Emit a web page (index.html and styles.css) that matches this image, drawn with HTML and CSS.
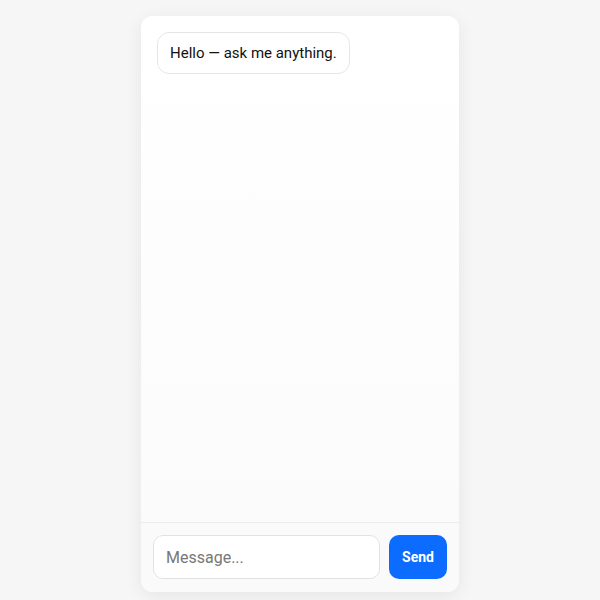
FILE: index.html
```html
<!DOCTYPE html>
<html>
<head>
<meta charset="utf-8">
<link rel="stylesheet" href="styles.css">
</head>
<body>
<div class="chat">
  <div class="messages">
    <div class="bubble">Hello — ask me anything.</div>
  </div>
  <div class="composer">
    <input class="field" type="text" placeholder="Message...">
    <button class="send">Send</button>
  </div>
</div>
</body>
</html>
```

FILE: styles.css
```css
html, body {
  margin: 0;
  padding: 0;
  height: 100%;
}
body {
  background: #f6f6f6;
  font-family: Roboto, "Liberation Sans", sans-serif;
  display: flex;
  justify-content: center;
  padding-top: 16px;
  box-sizing: border-box;
}
.chat {
  width: 318px;
  height: 576px;
  background: #ffffff;
  border-radius: 12px;
  box-shadow: 0 4px 18px rgba(0,0,0,0.07);
  display: flex;
  flex-direction: column;
  overflow: hidden;
}
.messages {
  flex: 1;
  padding: 16px;
  background: linear-gradient(#ffffff, #fbfbfb);
  display: flex;
  flex-direction: column;
  align-items: flex-start;
}
.bubble {
  border: 1px solid #e6e6e6;
  border-radius: 12px;
  padding: 10px 12px;
  font-size: 15px;
  line-height: 20px;
  color: #111;
  background: #fff;
}
.composer {
  border-top: 1px solid #ececec;
  background: #fafafa;
  padding: 12px 12px 13px;
  display: flex;
  gap: 9px;
}
.field {
  flex: 1;
  min-width: 0;
  height: 44px;
  box-sizing: border-box;
  border: 1px solid #e2e2e2;
  border-radius: 10px;
  padding: 0 12px;
  font-family: Roboto, "Liberation Sans", sans-serif;
  font-size: 16px;
  background: #fff;
  color: #111;
  outline: none;
}
.field::placeholder {
  color: #777;
}
.send {
  width: 58px;
  height: 44px;
  border: none;
  border-radius: 10px;
  background: #0b6cff;
  color: #fff;
  font-family: Roboto, "Liberation Sans", sans-serif;
  font-weight: 700;
  font-size: 14px;
  padding: 0;
}
```
